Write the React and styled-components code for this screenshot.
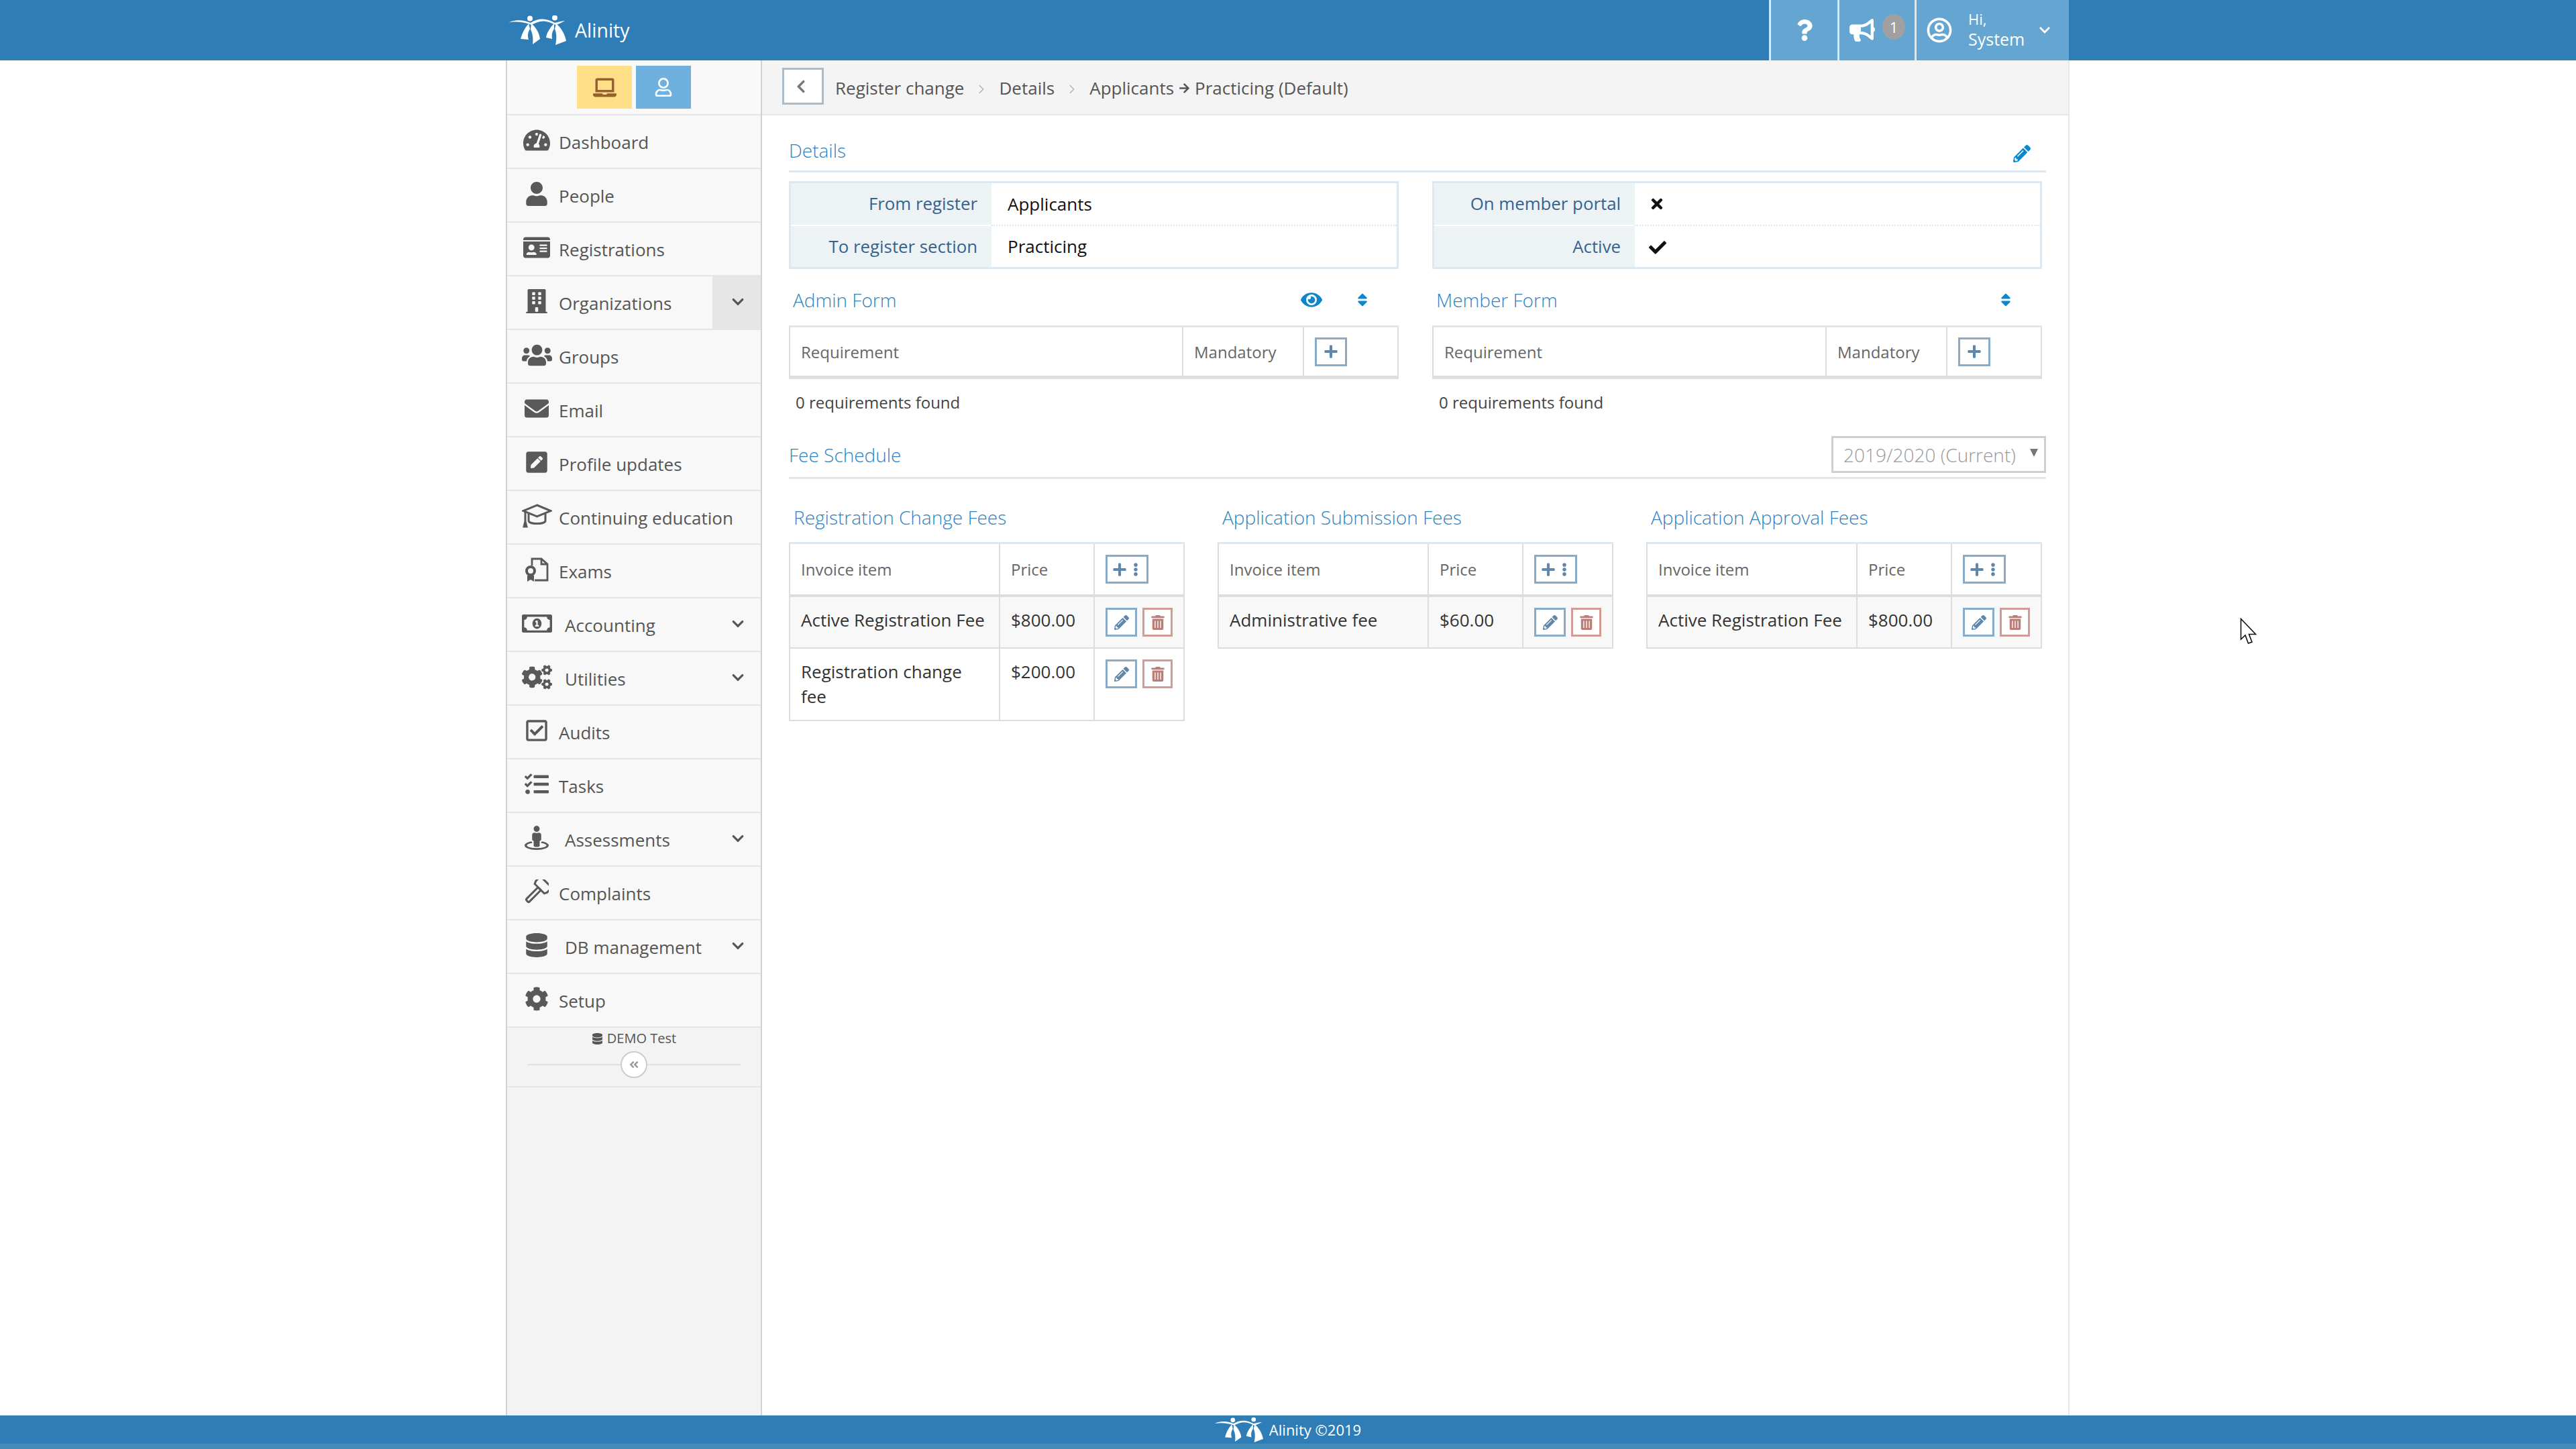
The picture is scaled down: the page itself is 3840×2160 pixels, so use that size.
import React from "react";
import styled, { createGlobalStyle } from "styled-components";
import {
  FaTachometerAlt, FaUser, FaIdCard, FaBuilding, FaUsers, FaEnvelope, FaPenSquare,
  FaRegMoneyBillAlt, FaCogs, FaRegCheckSquare, FaTasks, FaStreetView, FaDatabase, FaCog,
  FaChevronDown, FaChevronLeft, FaLaptop, FaRegUser, FaQuestion, FaBullhorn, FaRegUserCircle,
  FaPencilAlt, FaEye, FaSort, FaPlus, FaEllipsisV, FaTrashAlt, FaTimes, FaCheck, FaArrowRight,
  FaAngleDoubleLeft,
} from "react-icons/fa";
import { ChevronRight } from "lucide-react";

const Global = createGlobalStyle`
  html, body { margin: 0; padding: 0; background: #fff; }
  body { font-family: "Open Sans", "Liberation Sans", sans-serif; }
  * { box-sizing: border-box; }
`;

const Page = styled.div`
  position: relative;
  width: 3840px;
  height: 2160px;
  display: flex;
  flex-direction: column;
  overflow: hidden;
`;
const Header = styled.header`
  height: 90px;
  flex: none;
  background: #2f7db7;
  display: flex;
  justify-content: center;
`;
const HeaderInner = styled.div`
  width: 2332px;
  padding: 0 2px 0 4px;
  display: flex;
  align-items: stretch;
`;
const Brand = styled.div`
  display: flex;
  align-items: center;
  gap: 13px;
  color: #fff;
  font-size: 28.5px;
  line-height: 46px;
  margin-right: auto;
`;
const TopBtn = styled.div`
  width: ${(p) => p.$w}px;
  background: #64a6d1;
  border-left: 3px solid #d9e8f2;
  display: flex;
  align-items: center;
  color: #fff;
  position: relative;
  justify-content: ${(p) => (p.$center ? "center" : "flex-start")};
  padding-left: ${(p) => p.$pl || 0}px;
`;
const Badge = styled.span`
  width: 34px;
  height: 38px;
  border-radius: 50%;
  background: #a0a0a0;
  color: #fff;
  font-size: 22px;
  display: flex;
  align-items: center;
  justify-content: center;
  margin-left: 11px;
  margin-top: -10px;
`;
const Greeting = styled.div`
  font-size: 25px;
  line-height: 30px;
  margin: -5px 13px 0 24px;
  width: 92px;
`;
const HiLine = styled.div`
  font-size: 22px;
`;
const Shell = styled.div`
  flex: 1;
  min-height: 0;
  display: flex;
  justify-content: center;
`;
const Frame = styled.div`
  width: 2332px;
  display: flex;
`;
const Sidebar = styled.aside`
  width: 382px;
  flex: none;
  background: #f3f3f3;
  border-left: 2px solid #d2d2d2;
  border-right: 2px solid #d2d2d2;
  display: flex;
  flex-direction: column;
`;
const ModeBar = styled.div`
  height: 82px;
  background: #f9f9f9;
  border-bottom: 2px solid #e6e6e6;
  display: flex;
  justify-content: center;
  gap: 6px;
  padding-top: 8px;
`;
const ModeBtn = styled.div`
  width: 82px;
  height: 64px;
  background: ${(p) => p.$bg};
  color: ${(p) => p.$fg};
  display: flex;
  align-items: center;
  justify-content: center;
`;
const NavItem = styled.div`
  height: 80px;
  flex: none;
  background: #f8f8f8;
  border-bottom: 2px solid #e6e6e6;
  display: flex;
  align-items: center;
  padding: 1px 0 0 20px;
  color: #555;
  font-size: 26px;
`;
const NavIcon = styled.span`
  width: 48px;
  flex: none;
  display: flex;
  justify-content: center;
  margin-right: ${(p) => (p.$wide ? 18 : 9)}px;
  font-size: 36px;
  color: #595959;
  margin-top: -5px;
`;
const NavToggle = styled.span`
  margin-left: auto;
  width: 72px;
  align-self: stretch;
  margin: -1px 0 -2px auto;
  display: flex;
  align-items: center;
  justify-content: center;
  font-size: 20px;
  color: #555;
  padding: 0 0 4px 3px;
  background: ${(p) => (p.$open ? "#e6e6e6" : "transparent")};
`;
const SideFoot = styled.div`
  height: 89px;
  flex: none;
  border-bottom: 2px solid #e6e6e6;
  padding-top: 2px;
`;
const DemoLabel = styled.div`
  display: flex;
  justify-content: center;
  align-items: center;
  gap: 6px;
  font-size: 20px;
  line-height: 28px;
  color: #555;
`;
const CollapseRow = styled.div`
  margin: 5px 30px 0;
  display: flex;
  align-items: center;
`;
const CollapseRule = styled.span`
  flex: 1;
  height: 2px;
  background: #e0e0e0;
`;
const CollapseBtn = styled.span`
  width: 40px;
  height: 40px;
  border: 2px solid #ccc;
  border-radius: 50%;
  background: #fff;
  color: #999;
  font-size: 16px;
  display: flex;
  align-items: center;
  justify-content: center;
`;
const Main = styled.main`
  flex: 1;
  min-width: 0;
  border-right: 2px solid #e8e8e8;
  margin-right: 1px;
  display: flex;
  flex-direction: column;
`;
const Crumbs = styled.div`
  height: 82px;
  flex: none;
  background: #f4f4f4;
  border-bottom: 2px solid #e6e6e6;
  padding-left: 30px;
  display: flex;
  align-items: center;
  color: #555;
  font-size: 26px;
`;
const BackBtn = styled.div`
  width: 62px;
  height: 55px;
  align-self: flex-start;
  margin: 11px 17px 0 0;
  background: #fff;
  border: 3px solid #a9bccb;
  display: flex;
  align-items: center;
  justify-content: center;
  padding-right: 6px;
  color: #777;
  font-size: 22px;
`;
const CrumbText = styled.span`
  line-height: 42px;
  display: flex;
  align-items: center;
  gap: 7px;
  white-space: nowrap;
  margin-top: 2px;
`;
const CrumbSep = styled.span`
  height: 42px;
  width: 52px;
  display: flex;
  align-items: center;
  justify-content: center;
  color: #a9b0b6;
  margin-top: 5px;
`;
const Content = styled.div`
  padding: 34px 33px 0 40px;
`;
const SectionHead = styled.div`
  display: flex;
  justify-content: space-between;
  align-items: ${(p) => p.$align};
  border-bottom: 3px solid #dce8f2;
  padding-bottom: ${(p) => p.$pb}px;
  margin-top: ${(p) => p.$mt || 0}px;
`;
const Title = styled.div`
  font-size: 28px;
  font-weight: 300;
  line-height: 36px;
  color: #2f82c0;
  padding-left: ${(p) => p.$pl || 0}px;
`;
const HeadPencil = styled.span`
  font-size: 26px;
  color: #0e86cd;
  display: flex;
  padding-right: 23px;
`;
const Columns = styled.div`
  width: 1868px;
  display: grid;
  grid-template-columns: 909px 909px;
  gap: 50px;
`;
const FactTable = styled.div`
  margin-top: 13px;
  border: 3px solid #dce8f2;
  height: 131px;
  display: grid;
  grid-template-rows: 62px 2px 61px;
  grid-template-columns: 299px 1fr;
`;
const FactLabel = styled.div`
  background: #edf2f5;
  color: #35628f;
  font-size: 25.8px;
  text-align: right;
  padding-right: 21px;
  line-height: 61px;
`;
const FactValue = styled.div`
  color: #111;
  font-size: 26px;
  padding-left: ${(p) => (p.$icon ? 21 : 24)}px;
  line-height: 61px;
  display: flex;
  align-items: center;
`;
const FactGap = styled.div`
  background: #fff;
`;
const FactDots = styled.div`
  border-top: 2px dotted #dce8f2;
`;
const CheckMark = styled(FaCheck)`
  margin-top: 3px;
`;
const SubHead = styled.div`
  margin-top: 28px;
  height: 36px;
  display: flex;
  align-items: center;
  justify-content: space-between;
  padding: 0 42px 0 6px;
`;
const SubIcons = styled.div`
  display: flex;
  align-items: center;
  gap: 48px;
  color: #0e86cd;
  font-size: 24px;
`;
const EyeWrap = styled.span`
  font-size: 32px;
  display: flex;
`;
const SortWrap = styled.span`
  display: flex;
`;
const Grid = styled.div`
  margin-top: ${(p) => p.$mt}px;
  display: grid;
  grid-template-columns: ${(p) => p.$cols};
  border-top: 3px solid #dce8f2;
  border-left: 2px solid #ddd;
`;
const Cell = styled.div`
  min-height: ${(p) => p.$h}px;
  border-right: 2px solid #ddd;
  border-bottom: ${(p) => p.$bb}px solid #ddd;
  background: ${(p) => p.$bg || "transparent"};
  padding: ${(p) => (p.$head ? "0" : "16px")} 14px ${(p) => (p.$head ? "0" : "16px")} 16px;
  display: ${(p) => (p.$head ? "flex" : "block")};
  align-items: center;
  color: ${(p) => (p.$head ? "#666" : "#333")};
  font-size: ${(p) => (p.$head ? 24 : 26)}px;
  line-height: 37px;
`;
const Actions = styled.div`
  display: flex;
  gap: 8px;
`;
const IconBtn = styled.span`
  width: ${(p) => p.$w}px;
  height: 43px;
  border: 3px solid ${(p) => (p.$danger ? "#d09c95" : "#88abca")};
  color: ${(p) => (p.$danger ? "#b97e77" : "#5f86ab")};
  display: flex;
  align-items: center;
  justify-content: center;
  gap: 3px;
  font-size: 22px;
  background: #fff;
`;
const SmallDots = styled.span`
  display: flex;
  font-size: 20px;
`;
const Found = styled.div`
  margin-top: 17px;
  padding-left: 10px;
  font-size: 24px;
  line-height: 36px;
  color: #444;
`;
const YearSelect = styled.div`
  width: 320px;
  height: 55px;
  border: 3px solid #cfcfcf;
  display: flex;
  align-items: center;
  justify-content: space-between;
  padding: 0 9px 0 15px;
  color: #999;
  font-size: 28px;
  font-weight: 300;
`;
const Caret = styled.span`
  width: 0;
  height: 0;
  border-left: 6px solid transparent;
  border-right: 6px solid transparent;
  border-top: 12px solid #777;
  margin-bottom: 6px;
`;
const FeeGrid = styled.div`
  width: 1868px;
  margin-top: 39px;
  display: grid;
  grid-template-columns: repeat(3, 590px);
  gap: 49px;
`;
const Footer = styled.footer`
  height: 50px;
  flex: none;
  background: #2f7db7;
  border-bottom: 8px solid #438bb8;
  color: #fff;
  font-size: 22px;
  display: flex;
  align-items: center;
  justify-content: center;
  gap: 9px;
`;
const Cursor = styled.svg`
  position: absolute;
  left: 3339px;
  top: 921px;
`;
const LogoSvg = styled.svg`
  display: block;
  flex: none;
`;

const Logo = ({ w, h }) => (
  <LogoSvg width={w} height={h} viewBox="0 0 86 44" fill="#fff">
    <circle cx="32" cy="4.5" r="4" />
    <circle cx="69" cy="3.5" r="4" />
    <path d="M0 10.5 C10 6 22 6 33 11 C38 8 44 5 52 5.5 C58 6 64 8 69 11 C74 10 79 8.5 84 8 C80 10.5 75 13 70 14 C64 11 58 8.5 52 8.5 C46 8.5 40 11 34 14 C24 10 12 8.5 0 10.5Z" />
    <path d="M30 12 C24 19 20 27 18 35 L30 36 C28 30 29 25 32 20Z" />
    <path d="M34 12 C41 18 46 26 47 35 L36 43 C37 34 36 27 33 21Z" />
    <path d="M68 12 C62 18 57 26 56 33 L65 35 C64 29 65 24 68 20Z" />
    <path d="M71 12 C78 18 84 27 86 38 L70 44 C72 35 72 27 69 20Z" />
  </LogoSvg>
);
const GradCap = () => (
  <svg width="45" height="36" viewBox="0 0 45 36" fill="none" stroke="currentColor" strokeWidth="3">
    <path d="M22.5 2 L43 10.5 L22.5 19 L2 10.5Z" />
    <path d="M10 15 V25 C10 31 35 31 35 25 V15" />
    <path d="M5 12 V26" />
    <path d="M3 34 L5 26 L7 34Z" fill="currentColor" />
  </svg>
);
const ExamIcon = () => (
  <svg width="36" height="36" viewBox="0 0 36 36" fill="none" stroke="currentColor" strokeWidth="2.8">
    <path d="M11 12 V2 H25 L34 10 V34 H15" />
    <path d="M25 2 V10 H34" />
    <circle cx="9" cy="20" r="6" strokeWidth="4" />
    <path d="M4 27 V36 L9 33 L14 36 V27Z" fill="currentColor" stroke="none" />
  </svg>
);
const GavelIcon = () => (
  <svg width="36" height="36" viewBox="0 0 36 36" fill="none" stroke="currentColor" strokeWidth="3">
    <g transform="rotate(45 18 18)">
      <path d="M8 -2 H28 L30 2 V8 L28 12 H8 L6 8 V2Z" />
      <rect x="15" y="12" width="6" height="26" rx="2" />
    </g>
  </svg>
);

const navItems = [
  { label: "Dashboard", icon: <FaTachometerAlt size={40} /> },
  { label: "People", icon: <FaUser /> },
  { label: "Registrations", icon: <FaIdCard size={40} /> },
  { label: "Organizations", icon: <FaBuilding />, toggle: "open" },
  { label: "Groups", icon: <FaUsers size={45} /> },
  { label: "Email", icon: <FaEnvelope /> },
  { label: "Profile updates", icon: <FaPenSquare /> },
  { label: "Continuing education", icon: <GradCap /> },
  { label: "Exams", icon: <ExamIcon /> },
  { label: "Accounting", icon: <FaRegMoneyBillAlt size={45} />, toggle: "closed", wide: true },
  { label: "Utilities", icon: <FaCogs size={45} />, toggle: "closed", wide: true },
  { label: "Audits", icon: <FaRegCheckSquare /> },
  { label: "Tasks", icon: <FaTasks /> },
  { label: "Assessments", icon: <FaStreetView />, toggle: "closed", wide: true },
  { label: "Complaints", icon: <GavelIcon /> },
  { label: "DB management", icon: <FaDatabase />, toggle: "closed", wide: true },
  { label: "Setup", icon: <FaCog /> },
];

const AddButton = ({ menu }) => (
  <IconBtn $w={menu ? 64 : 48}>
    <FaPlus />
    {menu && (
      <SmallDots>
        <FaEllipsisV />
      </SmallDots>
    )}
  </IconBtn>
);

const RequirementTable = () => (
  <>
    <Grid $mt={20} $cols="586px 180px 141px">
      <Cell $head $h={77} $bb={5}>Requirement</Cell>
      <Cell $head $h={77} $bb={5}>Mandatory</Cell>
      <Cell $head $h={77} $bb={5}><AddButton /></Cell>
    </Grid>
    <Found>0 requirements found</Found>
  </>
);

const FeeTable = ({ title, rows }) => (
  <div>
    <Title $pl={7}>{title}</Title>
    <Grid $mt={19} $cols="313px 141px 134px">
      <Cell $head $h={79} $bb={4}>Invoice item</Cell>
      <Cell $head $h={79} $bb={4}>Price</Cell>
      <Cell $head $h={79} $bb={4}><AddButton menu /></Cell>
      {rows.map((r, i) => (
        <React.Fragment key={r.name}>
          <Cell $bb={2} $bg={i % 2 === 0 ? "#f8f8f8" : undefined}>{r.name}</Cell>
          <Cell $bb={2} $bg={i % 2 === 0 ? "#f8f8f8" : undefined}>{r.price}</Cell>
          <Cell $bb={2} $bg={i % 2 === 0 ? "#f8f8f8" : undefined}>
            <Actions>
              <IconBtn $w={47}><FaPencilAlt /></IconBtn>
              <IconBtn $w={45} $danger><FaTrashAlt /></IconBtn>
            </Actions>
          </Cell>
        </React.Fragment>
      ))}
    </Grid>
  </div>
);

const feeTables = [
  {
    title: "Registration Change Fees",
    rows: [
      { name: "Active Registration Fee", price: "$800.00" },
      { name: "Registration change fee", price: "$200.00" },
    ],
  },
  { title: "Application Submission Fees", rows: [{ name: "Administrative fee", price: "$60.00" }] },
  { title: "Application Approval Fees", rows: [{ name: "Active Registration Fee", price: "$800.00" }] },
];

export default function App() {
  return (
    <Page>
      <Global />
      <Header>
        <HeaderInner>
          <Brand>
            <Logo w={86} h={44} />
            Alinity
          </Brand>
          <TopBtn $w={102} $center><FaQuestion size={32} /></TopBtn>
          <TopBtn $w={115} $pl={15}>
            <FaBullhorn size={38} />
            <Badge>1</Badge>
          </TopBtn>
          <TopBtn $w={230} $pl={15}>
            <FaRegUserCircle size={38} />
            <Greeting>
              <HiLine>Hi,</HiLine>
              System
            </Greeting>
            <FaChevronDown size={18} />
          </TopBtn>
        </HeaderInner>
      </Header>
      <Shell>
        <Frame>
          <Sidebar>
            <ModeBar>
              <ModeBtn $bg="#ffdf88" $fg="#95622f"><FaLaptop size={35} /></ModeBtn>
              <ModeBtn $bg="#6fb1de" $fg="#fff"><FaRegUser size={28} /></ModeBtn>
            </ModeBar>
            {navItems.map((item) => (
              <NavItem key={item.label}>
                <NavIcon $wide={item.wide}>{item.icon}</NavIcon>
                {item.label}
                {item.toggle && (
                  <NavToggle $open={item.toggle === "open"}><FaChevronDown /></NavToggle>
                )}
              </NavItem>
            ))}
            <SideFoot>
              <DemoLabel><FaDatabase size={17} />DEMO Test</DemoLabel>
              <CollapseRow>
                <CollapseRule />
                <CollapseBtn><FaAngleDoubleLeft /></CollapseBtn>
                <CollapseRule />
              </CollapseRow>
            </SideFoot>
          </Sidebar>
          <Main>
            <Crumbs>
              <BackBtn><FaChevronLeft /></BackBtn>
              <CrumbText>Register change</CrumbText>
              <CrumbSep><ChevronRight size={22} strokeWidth={1.5} /></CrumbSep>
              <CrumbText>Details</CrumbText>
              <CrumbSep><ChevronRight size={22} strokeWidth={1.5} /></CrumbSep>
              <CrumbText>Applicants<FaArrowRight size={17} />Practicing (Default)</CrumbText>
            </Crumbs>
            <Content>
              <SectionHead $pb={12} $align="flex-end">
                <Title>Details</Title>
                <HeadPencil><FaPencilAlt /></HeadPencil>
              </SectionHead>
              <Columns>
                <div>
                  <FactTable>
                    <FactLabel>From register</FactLabel>
                    <FactValue>Applicants</FactValue>
                    <FactGap />
                    <FactDots />
                    <FactLabel>To register section</FactLabel>
                    <FactValue>Practicing</FactValue>
                  </FactTable>
                  <SubHead>
                    <Title>Admin Form</Title>
                    <SubIcons>
                      <EyeWrap><FaEye /></EyeWrap>
                      <SortWrap><FaSort /></SortWrap>
                    </SubIcons>
                  </SubHead>
                  <RequirementTable />
                </div>
                <div>
                  <FactTable>
                    <FactLabel>On member portal</FactLabel>
                    <FactValue $icon><FaTimes size={24} /></FactValue>
                    <FactGap />
                    <FactDots />
                    <FactLabel>Active</FactLabel>
                    <FactValue $icon><CheckMark size={26} /></FactValue>
                  </FactTable>
                  <SubHead>
                    <Title>Member Form</Title>
                    <SubIcons>
                      <SortWrap><FaSort /></SortWrap>
                    </SubIcons>
                  </SubHead>
                  <RequirementTable />
                </div>
              </Columns>
              <SectionHead $pb={6} $mt={32} $align="center">
                <Title>Fee Schedule</Title>
                <YearSelect>2019/2020 (Current)<Caret /></YearSelect>
              </SectionHead>
              <FeeGrid>
                {feeTables.map((t) => (
                  <FeeTable key={t.title} title={t.title} rows={t.rows} />
                ))}
              </FeeGrid>
            </Content>
          </Main>
        </Frame>
      </Shell>
      <Footer>
        <Logo w={72} h={37} />
        Alinity ©2019
      </Footer>
      <Cursor width="26" height="40" viewBox="0 0 26 40">
        <path d="M1.5 1.5 V32 L8 26 L12.5 38 L18 36 L13.5 24.5 L23.5 24.5Z" fill="#fff" stroke="#111" strokeWidth="1.6" />
      </Cursor>
    </Page>
  );
}
